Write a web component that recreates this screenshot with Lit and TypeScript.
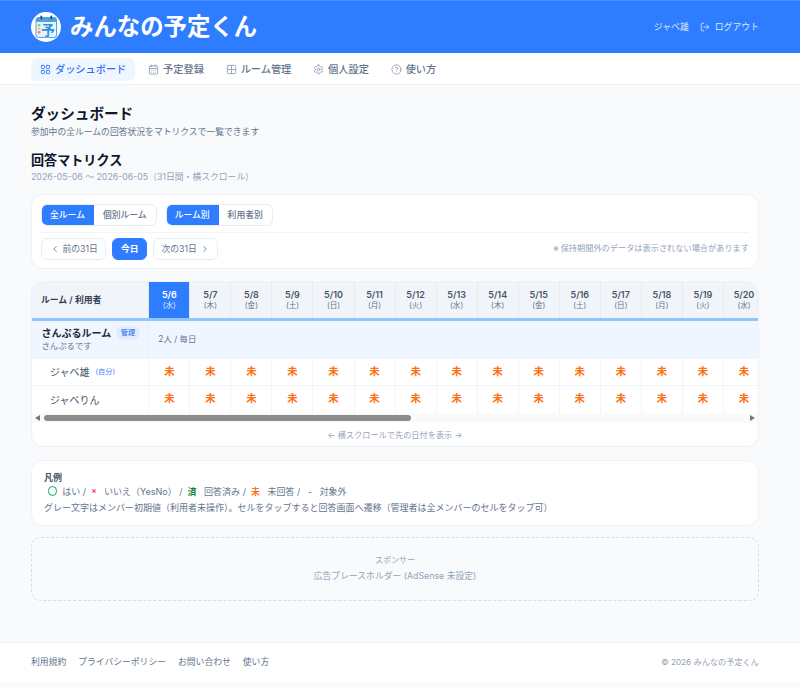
import { LitElement, html, css, svg } from 'lit';
import { customElement } from 'lit/decorators.js';

const WEEK = ['日', '月', '火', '水', '木', '金', '土'];
const days = Array.from({ length: 31 }, (_, i) => {
  const d = new Date(2026, 4, 6 + i);
  return { label: `${d.getMonth() + 1}/${d.getDate()}`, week: WEEK[d.getDay()] };
});

const icon = (body: unknown, size = 11) => html`<svg class="ico" width=${size} height=${size} viewBox="0 0 24 24" fill="none" stroke="currentColor" stroke-width="2" stroke-linecap="round" stroke-linejoin="round">${body}</svg>`;

const icons = {
  dash: svg`<rect x="3" y="3" width="7" height="7" rx="1.5"/><rect x="14" y="3" width="7" height="7" rx="1.5"/><rect x="3" y="14" width="7" height="7" rx="1.5"/><rect x="14" y="14" width="7" height="7" rx="1.5"/>`,
  cal: svg`<rect x="3" y="4" width="18" height="18" rx="2"/><path d="M16 2v4M8 2v4M3 10h18M8 14h.01M12 14h.01M16 14h.01M8 18h.01M12 18h.01M16 18h.01"/>`,
  grid: svg`<rect x="3" y="3" width="18" height="18" rx="2"/><path d="M12 3v18M3 12h18"/>`,
  gear: svg`<path d="M12.22 2h-.44a2 2 0 0 0-2 2v.18a2 2 0 0 1-1 1.73l-.43.25a2 2 0 0 1-2 0l-.15-.08a2 2 0 0 0-2.73.73l-.22.38a2 2 0 0 0 .73 2.73l.15.1a2 2 0 0 1 1 1.72v.51a2 2 0 0 1-1 1.74l-.15.09a2 2 0 0 0-.73 2.73l.22.38a2 2 0 0 0 2.73.73l.15-.08a2 2 0 0 1 2 0l.43.25a2 2 0 0 1 1 1.73V20a2 2 0 0 0 2 2h.44a2 2 0 0 0 2-2v-.18a2 2 0 0 1 1-1.73l.43-.25a2 2 0 0 1 2 0l.15.08a2 2 0 0 0 2.73-.73l.22-.39a2 2 0 0 0-.73-2.73l-.15-.08a2 2 0 0 1-1-1.74v-.5a2 2 0 0 1 1-1.74l.15-.09a2 2 0 0 0 .73-2.73l-.22-.38a2 2 0 0 0-2.73-.73l-.15.08a2 2 0 0 1-2 0l-.43-.25a2 2 0 0 1-1-1.73V4a2 2 0 0 0-2-2z"/><circle cx="12" cy="12" r="3"/>`,
  help: svg`<circle cx="12" cy="12" r="10"/><path d="M9.09 9a3 3 0 0 1 5.83 1c0 2-3 3-3 3M12 17h.01"/>`,
  logout: svg`<path d="M9 21H5a2 2 0 0 1-2-2V5a2 2 0 0 1 2-2h4M16 17l5-5-5-5M21 12H9"/>`,
  left: svg`<path d="M15 18l-6-6 6-6"/>`,
  right: svg`<path d="M9 18l6-6-6-6"/>`,
};

@customElement('app-root')
export class AppRoot extends LitElement {
  static styles = css`
    :host {
      display: block;
      height: 688px;
      overflow: hidden;
      background: #f8fafc;
      color: #64748b;
      font-family: Inter, 'Noto Sans CJK JP', sans-serif;
      font-size: 9px;
      line-height: 1.4;
    }
    * { box-sizing: border-box; }
    .ico { display: block; flex: none; }

    header {
      height: 53px;
      padding: 0 41px 0 31px;
      display: flex;
      align-items: center;
      justify-content: space-between;
      background: #2f7dff;
      border-top: 1px solid #4a8fff;
      color: #fff;
    }
    .brand { display: flex; align-items: center; gap: 9px; }
    .brand svg { display: block; }
    .brand b { font-size: 23.4px; font-weight: 700; line-height: 30px; }
    .user { display: flex; align-items: center; gap: 11px; color: #dbe8ff; font-size: 8.85px; }
    .logout { display: flex; align-items: center; gap: 5px; }

    nav {
      height: 32px;
      padding: 5px 31px 0;
      display: flex;
      gap: 4px;
      background: #fff;
      border-bottom: 1px solid #eef2f7;
    }
    .tab {
      height: 23px;
      padding: 0 8.8px 0 9px;
      display: flex;
      align-items: center;
      gap: 4px;
      border-radius: 6px;
      font-size: 10.2px;
      font-weight: 500;
      color: #64748b;
    }
    .tab .ico { color: #94a3b8; }
    .tab.on { background: #eff6ff; color: #2f6fed; }
    .tab.on .ico { color: #2f7dff; }

    main { padding: 20px 41px 0 31px; height: 557px; }
    h1, h2 { margin: 0; color: #0f172a; font-weight: 700; }
    h1 { font-size: 14.6px; line-height: 18px; }
    h2 { font-size: 13.1px; line-height: 18px; margin-top: 13px; }
    .sub { font-size: 8.8px; line-height: 12px; color: #64748b; margin-top: 3px; }
    .range { font-size: 8.8px; line-height: 12px; color: #94a3b8; margin-top: 2px; }

    .card {
      background: #fff;
      border: 1px solid #eef2f7;
      border-radius: 12px;
    }
    .tools { margin-top: 11px; height: 75px; padding: 9px 9px 0; }
    .toggles { display: flex; gap: 9px; padding-bottom: 6px; border-bottom: 1px solid #f1f5f9; }
    .seg { display: flex; height: 22px; border: 1px solid #e8edf4; border-radius: 6px; overflow: hidden; }
    .seg span { display: flex; align-items: center; padding: 0 9px; font-size: 8.8px; font-weight: 500; color: #64748b; }
    .seg span.on { background: #2f7dff; color: #fff; margin: -1px 0 -1px -1px; }
    .pager { display: flex; align-items: center; gap: 6px; margin-top: 5px; }
    .btn {
      height: 22px;
      padding: 0 7.5px;
      display: flex;
      align-items: center;
      gap: 3px;
      border: 1px solid #e8edf4;
      border-radius: 6px;
      font-size: 8.8px;
      color: #64748b;
    }
    .btn.on { background: #2f7dff; border-color: #2f7dff; color: #fff; font-weight: 600; padding: 0 7.5px; }
    .note { margin-left: auto; font-size: 8.2px; color: #94a3b8; }

    .matrix { margin-top: 12px; height: 166px; overflow: hidden; }
    .scroll { overflow: hidden; }
    .rows { width: 1389px; }
    .head, .member { display: grid; grid-template-columns: 117.3px repeat(31, 41.05px); }
    .head { height: 39px; background: #f1f5f9; border-bottom: 3px solid #93c5fd; }
    .head > div { border-right: 1px solid #e5eaf1; }
    .head .first {
      display: flex;
      align-items: center;
      padding-left: 9px;
      font-size: 8.8px;
      font-weight: 600;
      color: #334155;
    }
    .day {
      display: flex;
      flex-direction: column;
      align-items: center;
      justify-content: center;
      font-size: 9px;
      font-weight: 600;
      line-height: 11px;
      color: #475569;
    }
    .day small { font-size: 7.6px; font-weight: 400; color: #64748b; line-height: 11px; }
    .day.today { background: #2f7dff; color: #fff; }
    .day.today small { color: #dbe8ff; }
    .room { height: 38px; display: flex; background: #eff6ff; }
    .room .name { width: 117.3px; padding: 5px 0 0 9.5px; border-right: 1px solid #e6eef8; }
    .room .title { display: flex; align-items: center; gap: 5px; height: 14px; font-size: 10px; font-weight: 700; color: #1e293b; }
    .badge { padding: 0 4.5px; border-radius: 7px; background: #e0ecff; color: #2f6fed; font-size: 7.2px; line-height: 14px; font-weight: 500; }
    .room .desc { font-size: 8.4px; line-height: 13px; color: #64748b; }
    .room .meta { padding-left: 9px; display: flex; align-items: center; font-size: 8.4px; color: #64748b; }
    .member { height: 27px; border-bottom: 1px solid #f1f5f9; }
    .member:last-child { border-bottom: 0; }
    .member > div { display: flex; align-items: center; justify-content: center; border-right: 1px solid #f1f5f9; }
    .member .who { justify-content: flex-start; gap: 6px; padding-left: 18px; font-size: 10px; color: #475569; }
    .self { font-size: 7.2px; color: #3b82f6; }
    .mi { font-size: 10.4px; font-weight: 600; color: #f97316; }

    .bar { height: 10px; display: flex; align-items: center; background: #fafafa; padding: 0 3px; gap: 4px; }
    .arrow-l { width: 0; height: 0; border: 3px solid transparent; border-left: 0; border-right: 5px solid #777; }
    .arrow-r { width: 0; height: 0; border: 3px solid transparent; border-right: 0; border-left: 5px solid #777; margin-left: auto; }
    .thumb { width: 367px; height: 6px; border-radius: 3px; background: #8c8c8c; }
    .hint { height: 24px; padding-top: 1px; display: flex; align-items: center; justify-content: center; font-size: 8.2px; color: #94a3b8; }

    .legend { margin-top: 13px; height: 66px; padding: 10px 12px; font-size: 9px; line-height: 15.5px; color: #64748b; }
    .legend .lt { font-weight: 600; color: #475569; line-height: 13.5px; }
    .legend .keys { display: flex; align-items: center; white-space: pre; padding-left: 4px; line-height: 13px; margin-bottom: 2px; }
    .ok { width: 9.3px; height: 9.3px; border: 1.5px solid #10a36f; border-radius: 50%; margin-right: 5px; }
    .x { color: #f43f5e; font-weight: 700; margin-right: 5px; font-size: 8px; }
    .done { color: #15803d; font-weight: 700; margin-right: 5px; }
    .un { color: #f97316; font-weight: 700; margin-right: 5px; }

    .ad {
      margin-top: 11px;
      height: 64px;
      display: flex;
      flex-direction: column;
      align-items: center;
      justify-content: center;
      gap: 4px;
      border: 1px dashed #d5dce6;
      border-radius: 10px;
      font-size: 8.8px;
      color: #94a3b8;
    }
    .ad span:first-child { font-size: 8px; }

    footer {
      height: 40px;
      padding: 0 41px 0 31px;
      display: flex;
      align-items: center;
      justify-content: space-between;
      background: #fff;
      border-top: 1px solid #eef2f7;
      font-size: 8.8px;
      color: #64748b;
    }
    footer .links { display: flex; gap: 12px; }
    footer .copy { font-size: 8.2px; color: #94a3b8; }
  `;

  private logo() {
    return html`<svg width="30" height="30" viewBox="0 0 30 30">
      <circle cx="15" cy="15" r="15" fill="#fff"/>
      <rect x="5" y="5.5" width="20.5" height="20" rx="2.5" fill="#e8f4fd" stroke="#4aa3e6" stroke-width="1"/>
      <rect x="5" y="5.5" width="20.5" height="4.5" rx="1.5" fill="#4aa3e6"/>
      <rect x="9.5" y="3.5" width="1.6" height="4" rx=".8" fill="#33475b"/>
      <rect x="19.5" y="3.5" width="1.6" height="4" rx=".8" fill="#33475b"/>
      <rect x="6.8" y="12" width="2.6" height="2.2" fill="#7ed18f"/>
      <rect x="6.8" y="15.6" width="2.6" height="2.2" fill="#f5c451"/>
      <rect x="6.8" y="19.2" width="2.6" height="2.2" fill="#ef6f7a"/>
      <text x="17" y="22.5" text-anchor="middle" font-size="14" font-weight="700" fill="#2f8fdc" stroke="#fff" stroke-width=".5" paint-order="stroke" font-family="'Noto Sans CJK JP', sans-serif">予</text>
    </svg>`;
  }

  render() {
    return html`
      <header>
        <div class="brand">${this.logo()}<b>みんなの予定くん</b></div>
        <div class="user">
          <span>ジャベ雄</span>
          <span class="logout">${icon(icons.logout, 10)}ログアウト</span>
        </div>
      </header>
      <nav>
        <div class="tab on">${icon(icons.dash)}ダッシュボード</div>
        <div class="tab">${icon(icons.cal)}予定登録</div>
        <div class="tab">${icon(icons.grid)}ルーム管理</div>
        <div class="tab">${icon(icons.gear)}個人設定</div>
        <div class="tab">${icon(icons.help)}使い方</div>
      </nav>
      <main>
        <h1>ダッシュボード</h1>
        <div class="sub">参加中の全ルームの回答状況をマトリクスで一覧できます</div>
        <h2>回答マトリクス</h2>
        <div class="range">2026-05-06 〜 2026-06-05（31日間・横スクロール）</div>

        <div class="card tools">
          <div class="toggles">
            <div class="seg"><span class="on">全ルーム</span><span>個別ルーム</span></div>
            <div class="seg"><span class="on">ルーム別</span><span>利用者別</span></div>
          </div>
          <div class="pager">
            <div class="btn">${icon(icons.left, 10)}前の31日</div>
            <div class="btn on">今日</div>
            <div class="btn">次の31日${icon(icons.right, 10)}</div>
            <div class="note">※ 保持期間外のデータは表示されない場合があります</div>
          </div>
        </div>

        <div class="card matrix">
          <div class="scroll">
            <div class="rows">
              <div class="head">
                <div class="first">ルーム / 利用者</div>
                ${days.map((d, i) => html`<div class="day ${i === 0 ? 'today' : ''}">${d.label}<small>(${d.week})</small></div>`)}
              </div>
              <div class="room">
                <div class="name">
                  <div class="title">さんぷるルーム<span class="badge">管理</span></div>
                  <div class="desc">さんぷるです</div>
                </div>
                <div class="meta">2人 / 毎日</div>
              </div>
              ${this.memberRow('ジャベ雄', true)}
              ${this.memberRow('ジャベりん', false)}
            </div>
          </div>
          <div class="bar"><span class="arrow-l"></span><span class="thumb"></span><span class="arrow-r"></span></div>
          <div class="hint">← 横スクロールで先の日付を表示 →</div>
        </div>

        <div class="card legend">
          <div class="lt">凡例</div>
          <div class="keys"><span class="ok"></span>はい /  <span class="x">×</span> いいえ（YesNo） /  <span class="done">済</span> 回答済み /  <span class="un">未</span> 未回答 /   -   対象外</div>
          <div>グレー文字はメンバー初期値（利用者未操作）。セルをタップすると回答画面へ遷移（管理者は全メンバーのセルをタップ可）</div>
        </div>

        <div class="ad"><span>スポンサー</span><span>広告プレースホルダー (AdSense 未設定)</span></div>
      </main>
      <footer>
        <div class="links"><span>利用規約</span><span>プライバシーポリシー</span><span>お問い合わせ</span><span>使い方</span></div>
        <div class="copy">© 2026 みんなの予定くん</div>
      </footer>
    `;
  }

  private memberRow(name: string, self: boolean) {
    return html`<div class="member">
      <div class="who">${name}${self ? html`<span class="self">(自分)</span>` : ''}</div>
      ${days.map(() => html`<div class="mi">未</div>`)}
    </div>`;
  }
}
